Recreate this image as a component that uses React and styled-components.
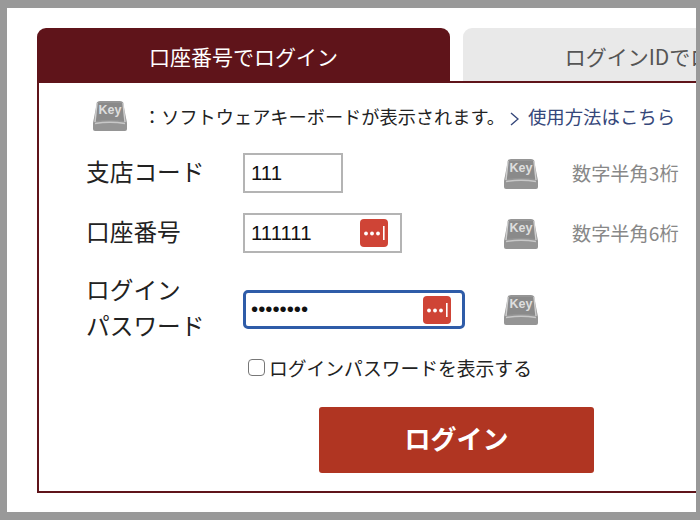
import styled, { createGlobalStyle } from "styled-components";

const GlobalStyle = createGlobalStyle`
  html, body {
    margin: 0;
    padding: 0;
    background: #fff;
    font-family: "Noto Sans CJK JP", "Liberation Sans", sans-serif;
  }
`;

const Frame = styled.div`
  box-sizing: border-box;
  width: 700px;
  height: 520px;
  border-style: solid;
  border-color: #999;
  border-width: 8px 4px 8px 7px;
  padding: 20px 0 0 30px;
  overflow: hidden;
  background: #fff;
`;

const Tabs = styled.div`
  display: flex;
  gap: 13px;
  width: 900px;
`;

const Tab = styled.div`
  flex: none;
  box-sizing: border-box;
  width: 413px;
  height: ${(p) => (p.$active ? "55px" : "53px")};
  margin-bottom: ${(p) => (p.$active ? "-2px" : "0")};
  position: relative;
  border-radius: 9px 9px 0 0;
  background: ${(p) => (p.$active ? "#5f141a" : "#e9e9e9")};
  color: ${(p) => (p.$active ? "#fff" : "#555")};
  font-size: 21px;
  line-height: 57px;
  text-align: center;
  white-space: nowrap;
`;

const Panel = styled.div`
  box-sizing: border-box;
  width: 800px;
  height: 412px;
  border: 2px solid #5f141a;
  padding: 17px 0 0 47px;
`;

const Intro = styled.div`
  display: flex;
  align-items: center;
  height: 32px;
  margin: 0 0 21px 6px;
  font-size: 18.2px;
  color: #222;
  white-space: nowrap;
`;

const IntroText = styled.span`
  margin-left: 15px;
`;

const HelpLink = styled.a`
  display: flex;
  align-items: center;
  margin-left: 5px;
  gap: 9px;
  font-size: 18.4px;
  color: #35477a;
  text-decoration: none;
`;

const Chevron = styled.svg`
  margin-top: 6px;
`;

const Row = styled.div`
  display: grid;
  grid-template-columns: 157px 261px 68px auto;
  align-items: center;
  margin-bottom: 20px;
`;

const Label = styled.div`
  margin: -2px 0 2px;
  font-size: 23.7px;
  line-height: 36px;
  color: #222;
  white-space: nowrap;
`;

const InputBox = styled.div`
  position: relative;
  box-sizing: border-box;
  width: ${(p) => p.$width}px;
  height: ${(p) => (p.$focused ? "39px" : "40px")};
`;

const Field = styled.input`
  box-sizing: border-box;
  display: block;
  width: 100%;
  height: 100%;
  padding: 0 0 0 ${(p) => (p.$focused ? "5px" : "6px")};
  border: ${(p) => (p.$focused ? "3px solid #2f5ca8" : "2px solid #b4b4b4")};
  border-radius: ${(p) => (p.$focused ? "5px" : "0")};
  font-family: "Liberation Sans", sans-serif;
  font-size: 20.4px;
  color: #111;
  background: #fff;
  outline: none;
`;

const PasswordBadge = styled.svg`
  position: absolute;
  top: 6px;
  right: 14px;
  width: 28px;
  height: 28px;
`;

const KeyCap = styled.svg`
  display: block;
  width: 36px;
  height: 32px;
  flex: none;
`;

const RowKey = styled.div`
  margin: 2px 0 0 -1px;
`;

const Hint = styled.div`
  font-size: 19.2px;
  color: #888;
  white-space: nowrap;
`;

const ShowRow = styled.label`
  display: flex;
  align-items: center;
  gap: 4px;
  margin: -8px 0 0 162px;
  height: 24px;
  font-size: 18.8px;
  color: #222;
  white-space: nowrap;
`;

const ShowText = styled.span`
  margin-bottom: 3px;
`;

const Check = styled.input`
  appearance: none;
  box-sizing: border-box;
  width: 17px;
  height: 17px;
  margin: 0 0 3px;
  border: 1.5px solid #777;
  border-radius: 4px;
  background: #fff;
`;

const LoginButton = styled.button`
  display: block;
  width: 275px;
  height: 66px;
  margin: 26px 0 0 233px;
  padding: 0 0 5px;
  border: 0;
  border-radius: 3px;
  background: #b03522;
  color: #fff;
  font-family: inherit;
  font-size: 26px;
  font-weight: 700;
`;

function KeyIcon() {
  return (
    <KeyCap viewBox="0 0 36 32" aria-hidden="true">
      <path d="M5 2.5 Q5.5 1 8 1 H28 Q30.5 1 31 2.5 L35 23 V29 Q35 31 33 31 H3 Q1 31 1 29 V23 Z" fill="#959595" />
      <path d="M5.5 3 H30.5 L32 21 Q26 20 18 20 Q10 20 4 21 Z" fill="#8a8a8a" />
      <path d="M5 3 L3 22 M31 3 L33 22" stroke="#cfcfcf" strokeWidth="1.4" fill="none" />
      <path d="M3 23.5 Q18 21 33 23.5" stroke="#c8c8c8" strokeWidth="1.4" fill="none" />
      <text x="6.5" y="13.5" fontFamily="Liberation Sans, sans-serif" fontSize="12.5" fontWeight="700" fill="#dedede">
        Key
      </text>
    </KeyCap>
  );
}

function PasswordIcon() {
  return (
    <PasswordBadge viewBox="0 0 28 28" aria-hidden="true">
      <rect width="28" height="28" rx="4" fill="#cf4436" />
      <circle cx="6" cy="14.5" r="1.9" fill="#fff" />
      <circle cx="12" cy="14.5" r="1.9" fill="#fff" />
      <circle cx="18" cy="14.5" r="1.9" fill="#fff" />
      <rect x="23" y="7" width="1.6" height="14" fill="#fff" />
    </PasswordBadge>
  );
}

export default function App() {
  return (
    <>
      <GlobalStyle />
      <Frame>
        <Tabs>
          <Tab $active>口座番号でログイン</Tab>
          <Tab>ログインIDでログイン</Tab>
        </Tabs>
        <Panel>
          <Intro>
            <KeyIcon />
            <IntroText>：ソフトウェアキーボードが表示されます。</IntroText>
            <HelpLink href="#">
              <Chevron width="9" height="14" viewBox="0 0 9 14" aria-hidden="true">
                <path d="M1 1 L8 7 L1 13" stroke="#35477a" strokeWidth="1.4" fill="none" />
              </Chevron>
              使用方法はこちら
            </HelpLink>
          </Intro>
          <Row>
            <Label>支店コード</Label>
            <InputBox $width={100}>
              <Field defaultValue="111" />
            </InputBox>
            <RowKey>
              <KeyIcon />
            </RowKey>
            <Hint>数字半角3桁</Hint>
          </Row>
          <Row>
            <Label>口座番号</Label>
            <InputBox $width={159}>
              <Field defaultValue="111111" />
              <PasswordIcon />
            </InputBox>
            <RowKey>
              <KeyIcon />
            </RowKey>
            <Hint>数字半角6桁</Hint>
          </Row>
          <Row>
            <Label>
              ログイン
              <br />
              パスワード
            </Label>
            <InputBox $width={222} $focused>
              <Field $focused type="password" defaultValue="11111111" />
              <PasswordIcon />
            </InputBox>
            <RowKey>
              <KeyIcon />
            </RowKey>
          </Row>
          <ShowRow>
            <Check type="checkbox" />
            <ShowText>ログインパスワードを表示する</ShowText>
          </ShowRow>
          <LoginButton>ログイン</LoginButton>
        </Panel>
      </Frame>
    </>
  );
}
